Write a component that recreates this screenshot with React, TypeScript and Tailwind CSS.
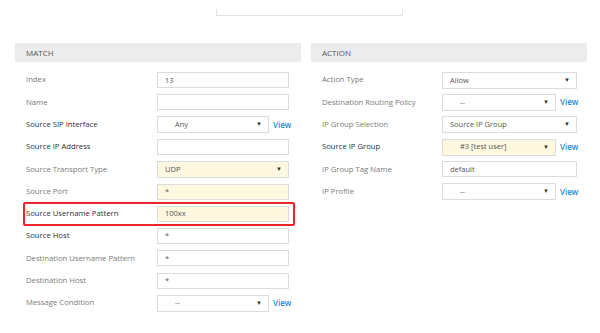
import React from "react"

type Row = {
  label: string
  value?: string
  kind: "input" | "select" | "selectView"
  strong?: boolean
  yellow?: boolean
  indent?: boolean
  highlight?: boolean
}

const matchRows: Row[] = [
  { label: "Index", value: "13", kind: "input" },
  { label: "Name", value: "", kind: "input" },
  { label: "Source SIP Interface", value: "Any", kind: "selectView", strong: true, indent: true },
  { label: "Source IP Address", value: "", kind: "input", strong: true },
  { label: "Source Transport Type", value: "UDP", kind: "select", yellow: true },
  { label: "Source Port", value: "*", kind: "input", yellow: true },
  { label: "Source Username Pattern", value: "100xx", kind: "input", strong: true, yellow: true, highlight: true },
  { label: "Source Host", value: "*", kind: "input", strong: true },
  { label: "Destination Username Pattern", value: "*", kind: "input" },
  { label: "Destination Host", value: "*", kind: "input" },
  { label: "Message Condition", value: "--", kind: "selectView", indent: true },
]

const actionRows: Row[] = [
  { label: "Action Type", value: "Allow", kind: "select" },
  { label: "Destination Routing Policy", value: "--", kind: "selectView", indent: true },
  { label: "IP Group Selection", value: "Source IP Group", kind: "select" },
  { label: "Source IP Group", value: "#3 [test user]", kind: "selectView", strong: true, yellow: true, indent: true },
  { label: "IP Group Tag Name", value: "default", kind: "input" },
  { label: "IP Profile", value: "--", kind: "selectView", indent: true },
]

function Field({ row, full, short }: { row: Row; full: string; short: string }) {
  const bg = row.yellow ? "bg-[#fdf8df]" : "bg-white"
  if (row.kind === "input") {
    return (
      <div className={`${full} h-[16px] border border-[#dcdcdc] ${bg} flex items-center pl-[7px] text-[7.5px] text-[#555]`}>
        {row.value}
      </div>
    )
  }
  const box = (
    <div
      className={`${row.kind === "selectView" ? short : full} h-[17px] border border-[#dcdcdc] ${bg} flex items-center justify-between pr-[6px] text-[7.5px] text-[#555] ${row.indent ? "pl-[17px]" : "pl-[7px]"}`}
    >
      <span>{row.value}</span>
      <span className="text-[6px] text-[#333]">▼</span>
    </div>
  )
  if (row.kind === "select") return box
  return (
    <div className="flex items-center">
      {box}
      <span className="ml-[4px] text-[8px] font-semibold text-[#1b8ad6]">View</span>
    </div>
  )
}

function Section({
  title,
  rows,
  width,
  labelW,
  full,
  short,
}: {
  title: string
  rows: Row[]
  width: string
  labelW: string
  full: string
  short: string
}) {
  return (
    <div className={width}>
      <div className="h-[19px] bg-[#ececec] flex items-center pl-[11px] text-[8px] text-[#555]">{title}</div>
      <div className="pt-[7px]">
        {rows.map((r) => (
          <div
            key={r.label}
            className={`flex items-center ${r.highlight ? "border-2 border-[#e8262c] ml-[8px] pl-[1px] mr-[6px] rounded-[2px] -my-[1px] h-[24.2px]" : "h-[22.3px] pl-[11px]"}`}
          >
            <div className={`${labelW} shrink-0 text-[7.7px] ${r.strong ? "text-[#2f2f2f] font-medium" : "text-[#7a7a7a]"}`}>
              {r.label}
            </div>
            <Field row={r} full={full} short={short} />
          </div>
        ))}
      </div>
    </div>
  )
}

export default function App() {
  return (
    <div
      className="w-[600px] h-[333px] bg-white overflow-hidden"
      style={{ fontFamily: '"Open Sans", "Liberation Sans", sans-serif' }}
    >
      {/* top box edge */}
      <div className="ml-[216px] mt-[9px] w-[187px] h-[7px] border-x border-b border-[#e2e2e2]" />

      <div className="flex gap-[10px] pl-[15px] mt-[27px]">
        <Section title="MATCH" rows={matchRows} width="w-[286px]" labelW="w-[131px]" full="w-[132px]" short="w-[112px]" />
        <Section title="ACTION" rows={actionRows} width="w-[276px]" labelW="w-[120px]" full="w-[135px]" short="w-[114px]" />
      </div>
    </div>
  )
}
